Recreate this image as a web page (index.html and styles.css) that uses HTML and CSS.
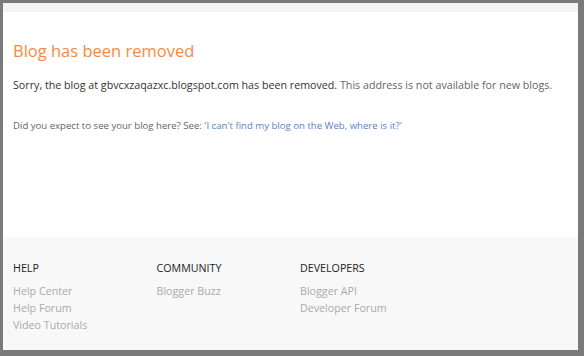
FILE: index.html
```html
<!doctype html>
<html lang="en">
    <head>
        <meta charset="UTF-8">
        <title>Blog has been removed</title>
        <link rel="stylesheet" href="styles.css">
    </head>
    <body>
        <div class="page">
            <div class="top-bar"></div>
            <div class="main">
                <h1 class="title">Blog has been removed</h1>
                <p class="message"><span class="strong">Sorry, the blog at gbvcxzaqazxc.blogspot.com has been removed.</span> This address is not available for new blogs.</p>
                <p class="hint">Did you expect to see your blog here? See: <a href="#">'I can't find my blog on the Web, where is it?'</a></p>
            </div>
            <div class="footer">
                <div class="footer-col">
                    <h4>HELP</h4>
                    <a href="#">Help Center</a>
                    <a href="#">Help Forum</a>
                    <a href="#">Video Tutorials</a>
                </div>
                <div class="footer-col">
                    <h4>COMMUNITY</h4>
                    <a href="#">Blogger Buzz</a>
                </div>
                <div class="footer-col">
                    <h4>DEVELOPERS</h4>
                    <a href="#">Blogger API</a>
                    <a href="#">Developer Forum</a>
                </div>
            </div>
        </div>
    </body>
</html>
```

FILE: styles.css
```css
* {
    box-sizing: border-box;
}
html {
    font-family: "Open Sans", sans-serif;
    background-color: #7a7a7a;
}
body {
    margin: 0;
    padding: 3px 6px 6px 3px;
}
.page {
    height: 347px;
    display: flex;
    flex-direction: column;
    background-color: #fff;
}
.top-bar {
    height: 9px;
    background-color: #f4f4f4;
}
.main {
    flex: 1;
    padding: 27px 10px 0;
}
.title {
    margin: 0 0 14px;
    font-size: 16.5px;
    font-weight: 400;
    line-height: 24px;
    color: #f8893f;
}
.message {
    margin: 0 0 25px;
    font-size: 10.7px;
    line-height: 17px;
    color: #666;
    white-space: nowrap;
}
.message .strong {
    color: #333;
}
.hint {
    margin: 0;
    font-size: 9.6px;
    line-height: 14px;
    color: #666;
}
.hint a {
    color: #5b82c4;
    text-decoration: none;
}
.footer {
    height: 113px;
    display: flex;
    padding: 23px 10px 0;
    background-color: #f8f8f8;
}
.footer-col {
    width: 143.5px;
    display: flex;
    flex-direction: column;
}
.footer-col h4 {
    margin: 0 0 7px;
    font-size: 10.7px;
    font-weight: 400;
    line-height: 16px;
    color: #222;
}
.footer-col a {
    font-size: 10.7px;
    line-height: 17px;
    color: #aaa;
    text-decoration: none;
}
```
